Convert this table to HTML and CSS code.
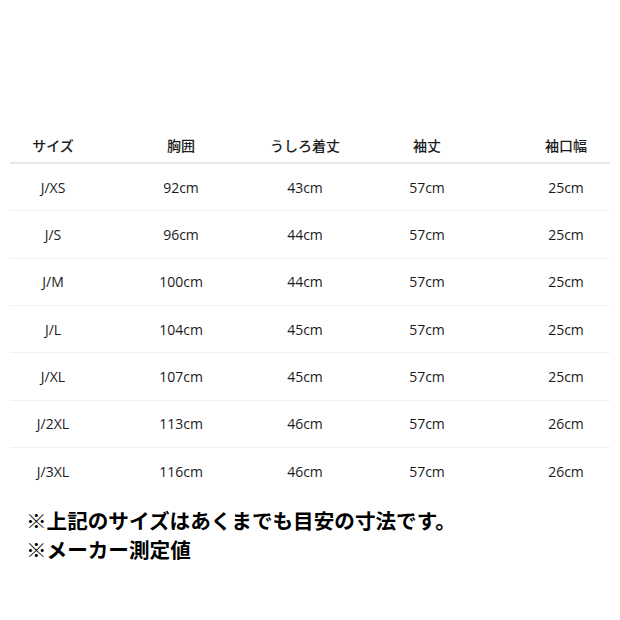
FILE: index.html
```html
<!DOCTYPE html>
<html lang="ja">
<head>
<meta charset="utf-8">
<link rel="stylesheet" href="styles.css">
</head>
<body>
<div class="page">
  <div class="table">
    <div class="row head">
      <div class="c c1">サイズ</div><div class="c c2">胸囲</div><div class="c c3">うしろ着丈</div><div class="c c4">袖丈</div><div class="c c5">袖口幅</div>
    </div>
    <div class="row">
      <div class="c c1">J/XS</div><div class="c c2">92cm</div><div class="c c3">43cm</div><div class="c c4">57cm</div><div class="c c5">25cm</div>
    </div>
    <div class="row">
      <div class="c c1">J/S</div><div class="c c2">96cm</div><div class="c c3">44cm</div><div class="c c4">57cm</div><div class="c c5">25cm</div>
    </div>
    <div class="row">
      <div class="c c1">J/M</div><div class="c c2">100cm</div><div class="c c3">44cm</div><div class="c c4">57cm</div><div class="c c5">25cm</div>
    </div>
    <div class="row">
      <div class="c c1">J/L</div><div class="c c2">104cm</div><div class="c c3">45cm</div><div class="c c4">57cm</div><div class="c c5">25cm</div>
    </div>
    <div class="row">
      <div class="c c1">J/XL</div><div class="c c2">107cm</div><div class="c c3">45cm</div><div class="c c4">57cm</div><div class="c c5">25cm</div>
    </div>
    <div class="row">
      <div class="c c1">J/2XL</div><div class="c c2">113cm</div><div class="c c3">46cm</div><div class="c c4">57cm</div><div class="c c5">26cm</div>
    </div>
    <div class="row last">
      <div class="c c1">J/3XL</div><div class="c c2">116cm</div><div class="c c3">46cm</div><div class="c c4">57cm</div><div class="c c5">26cm</div>
    </div>
  </div>
  <div class="notes">
    <p>※上記のサイズはあくまでも目安の寸法です。</p>
    <p>※メーカー測定値</p>
  </div>
</div>
</body>
</html>
```

FILE: styles.css
```css
html, body {
  margin: 0;
  padding: 0;
  background: #ffffff;
}
body {
  font-family: "Open Sans", "Noto Sans CJK JP", sans-serif;
  color: #1a1a1a;
}
.page {
  width: 620px;
  height: 620px;
  padding-top: 130px;
  box-sizing: border-box;
}
.table {
  margin-left: 10px;
  width: 600px;
  display: flex;
  flex-direction: column;
}
.row {
  display: grid;
  grid-template-columns: 86px 170px 78px 166px 100px;
  height: 47.35px;
  align-items: center;
  border-bottom: 1px solid #f1f1f1;
  font-size: 14px;
  font-weight: 500;
  box-sizing: border-box;
}
.row.head {
  height: 34px;
  border-bottom: 2px solid #e8e8e8;
  padding-bottom: 2px;
}
.row.last {
  border-bottom: none;
}
.c {
  text-align: center;
  white-space: nowrap;
}
.c5 {
  padding-left: 12px;
}
.notes {
  margin-top: 11px;
  padding-left: 26px;
  font-family: "Noto Sans CJK JP", sans-serif;
  font-weight: 700;
  font-size: 20.6px;
  color: #000000;
}
.notes p {
  margin: 0;
  line-height: 29px;
}
```
